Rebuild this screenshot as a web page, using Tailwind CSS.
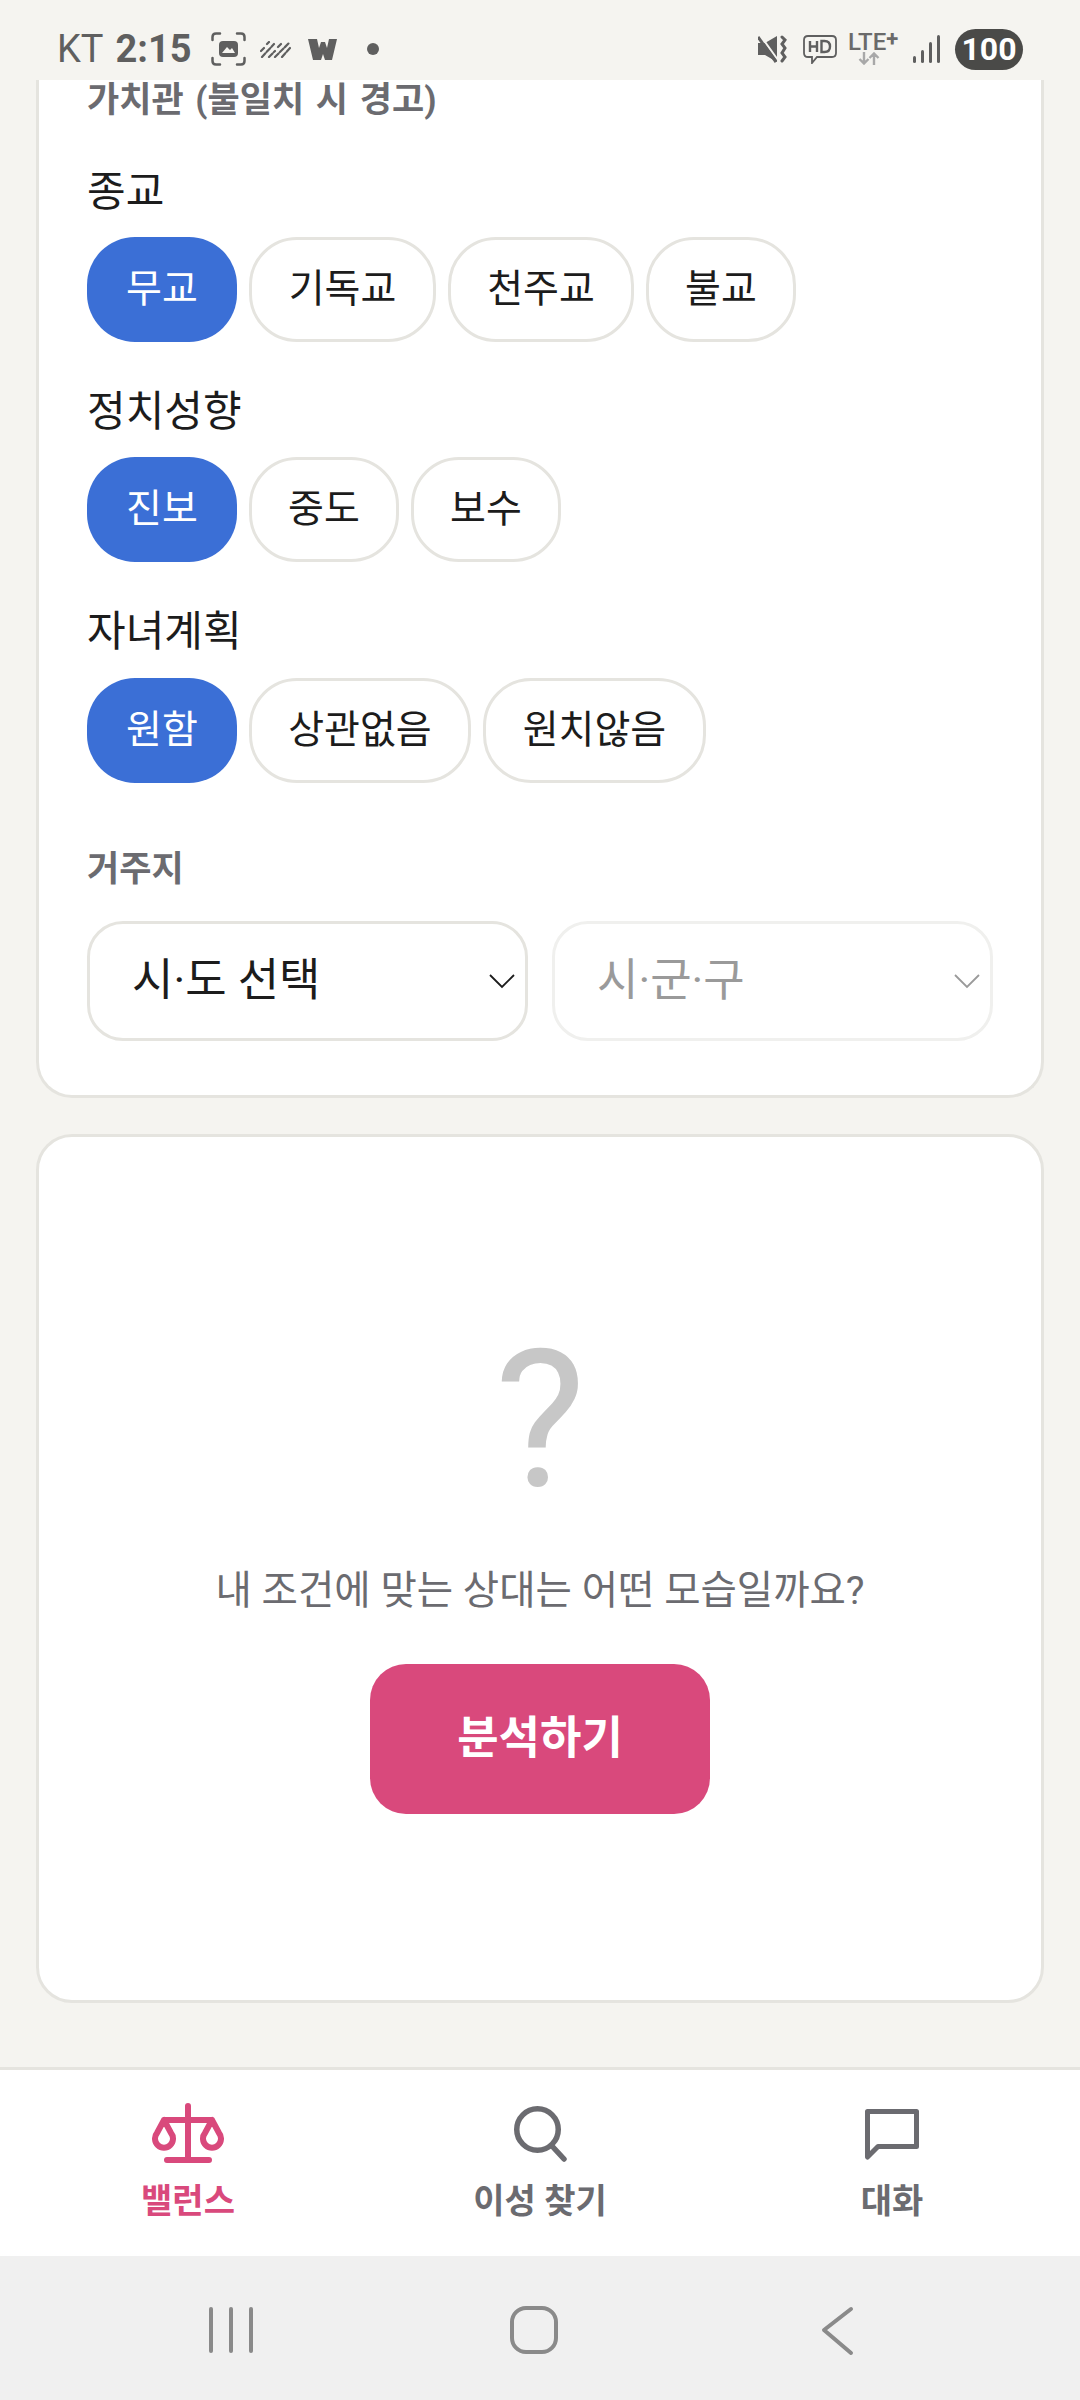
<!DOCTYPE html>
<html lang="ko">
<head>
  <meta charset="UTF-8" />
  <meta name="viewport" content="width=device-width, initial-scale=1.0"/>
  <title>밸런스</title>
  <script src="https://cdn.jsdelivr.net/npm/@tailwindcss/browser@4"></script>
</head>
<body class="bg-[#f5f4f0] font-['Roboto','Noto_Sans_CJK_KR',sans-serif]">
<div class="w-[1080px] h-[2400px] overflow-hidden flex flex-col">

  <!-- status bar -->
  <div class="h-[80px] shrink-0 flex items-center justify-between pl-[57px] pr-[57px] pt-[18px] text-[#5f5f5f]">
    <div class="flex items-center">
      <span class="text-[38px] leading-none">KT</span>
      <span class="text-[38px] leading-none font-bold ml-[12px]">2:15</span>
      <svg class="ml-[19px]" width="35" height="34" viewBox="0 0 35 34" fill="none" stroke="#5f5f5f" stroke-width="2.500" stroke-linecap="round"><path d="M1.500 8V5q0-3.500 3.500-3.500h4M26 1.500h4q3.500 0 3.500 3.500v3M33.500 26v3q0 3.500-3.500 3.500h-4M9 32.500H5q-3.500 0-3.500-3.500v-3"/><rect x="8" y="9" width="19" height="16" rx="4" fill="#5f5f5f" stroke="none"/><path d="M11 21l5-6 3 3 2-2 3 5z" fill="#f5f4f0" stroke="none"/></svg>
      <svg class="ml-[14px]" width="31" height="17" viewBox="0 0 31 17" fill="none" stroke="#5f5f5f" stroke-width="2.200" stroke-linecap="round"><path d="M1 10l3-3M7 3l2-2M2 16L14 3M9 16l6-6M18 6l3-3M15 16L29 2M22 16l8-9" stroke-dasharray="5 2"/></svg>
      <svg class="ml-[17px]" width="29" height="21" viewBox="0 0 29 21" fill="#5f5f5f"><path d="M0 0h9l2 9 2-6h4l2 6 2-9h8l-5 21h-7l-2-6-2 6H5z"/></svg>
      <span class="ml-[30px] w-[12px] h-[12px] rounded-full bg-[#5f5f5f]"></span>
    </div>
    <div class="flex items-center">
      <svg width="29" height="28" viewBox="0 0 29 28" fill="#5f5f5f"><path d="M0 8h7L19 1v26L7 20H0z"/><path d="M2 0l18 25" stroke="#f5f4f0" stroke-width="2"/><path d="M0 2l18 25" stroke="#5f5f5f" stroke-width="3"/><path d="M24 2l3 3-3 4 3 4-3 5 3 4-3 4" fill="none" stroke="#5f5f5f" stroke-width="3" stroke-linecap="round"/></svg>
      <svg class="ml-[16px]" width="34" height="29" viewBox="0 0 34 29" fill="none" stroke="#5f5f5f" stroke-width="1.800"><path d="M5 1h24q4 0 4 4v13q0 4-4 4H14l-5 6v-6H5q-4 0-4-4V5q0-4 4-4z"/><path d="M7 6v11M7 11.500h7M14 6v11M18.500 6v11h3q5.500 0 5.500-5.500T21.500 6z" stroke-width="2.400"/></svg>
      <div class="ml-[11px] w-[54px] h-[34px] flex flex-col items-start">
        <div class="flex items-start h-[20px]">
          <span class="text-[24px] leading-[20px] font-medium text-[#6a6a6a]">LTE</span>
          <span class="text-[22px] leading-[14px] font-bold text-[#6a6a6a]">+</span>
        </div>
        <svg class="ml-[10px]" width="22" height="13" viewBox="0 0 22 13" fill="none" stroke="#a8a8a8" stroke-width="2.400"><path d="M6 0v11M1.500 7L6 11.500 10.500 7M16 13V2M11.500 6L16 1.500 20.500 6"/></svg>
      </div>
      <svg class="ml-[11px]" width="27" height="28" viewBox="0 0 27 28" fill="#5f5f5f"><rect x="0" y="21" width="3" height="7" rx="1.500"/><rect x="8" y="15" width="3" height="13" rx="1.500"/><rect x="16" y="7" width="3" height="21" rx="1.500"/><rect x="24" y="0" width="3" height="28" rx="1.500"/></svg>
      <span class="ml-[15px] w-[68px] h-[41px] rounded-full bg-[#4a4a48] text-white text-[32px] font-bold leading-[41px] text-center">100</span>
    </div>
  </div>

  <!-- filter card, scrolled under the status bar -->
  <section class="mx-[36px] h-[1018px] shrink-0 bg-white border-[3px] border-t-0 border-[#e5e4df] rounded-b-[36px] px-[48px]">
    <h2 class="text-[35px] font-bold leading-[40px] text-[#6b6b70] mt-[1px] [word-spacing:3px]">가치관 (불일치 시 경고)</h2>

    <h3 class="text-[42px] leading-[56px] text-[#1c1c1c] mt-[43px]">종교</h3>
    <div class="flex gap-[12px] mt-[17px]">
      <span class="h-[105px] w-[150px] rounded-[48px] bg-[#3b6fd6] text-white text-[39px] flex items-center justify-center">무교</span>
      <span class="h-[105px] w-[187px] rounded-[48px] bg-white border-[3px] border-[#e5e4df] text-[#1c1c1c] text-[39px] flex items-center justify-center">기독교</span>
      <span class="h-[105px] w-[186px] rounded-[48px] bg-white border-[3px] border-[#e5e4df] text-[#1c1c1c] text-[39px] flex items-center justify-center">천주교</span>
      <span class="h-[105px] w-[150px] rounded-[48px] bg-white border-[3px] border-[#e5e4df] text-[#1c1c1c] text-[39px] flex items-center justify-center">불교</span>
    </div>

    <h3 class="text-[42px] leading-[56px] text-[#1c1c1c] mt-[42px]">정치성향</h3>
    <div class="flex gap-[12px] mt-[17px]">
      <span class="h-[105px] w-[150px] rounded-[48px] bg-[#3b6fd6] text-white text-[39px] flex items-center justify-center">진보</span>
      <span class="h-[105px] w-[150px] rounded-[48px] bg-white border-[3px] border-[#e5e4df] text-[#1c1c1c] text-[39px] flex items-center justify-center">중도</span>
      <span class="h-[105px] w-[150px] rounded-[48px] bg-white border-[3px] border-[#e5e4df] text-[#1c1c1c] text-[39px] flex items-center justify-center">보수</span>
    </div>

    <h3 class="text-[42px] leading-[56px] text-[#1c1c1c] mt-[42px]">자녀계획</h3>
    <div class="flex gap-[12px] mt-[18px]">
      <span class="h-[105px] w-[150px] rounded-[48px] bg-[#3b6fd6] text-white text-[39px] flex items-center justify-center">원함</span>
      <span class="h-[105px] w-[222px] rounded-[48px] bg-white border-[3px] border-[#e5e4df] text-[#1c1c1c] text-[39px] flex items-center justify-center">상관없음</span>
      <span class="h-[105px] w-[223px] rounded-[48px] bg-white border-[3px] border-[#e5e4df] text-[#1c1c1c] text-[39px] flex items-center justify-center">원치않음</span>
    </div>

    <h2 class="text-[35px] font-bold leading-[40px] text-[#6b6b70] mt-[67px]">거주지</h2>
    <div class="flex gap-[24px] mt-[31px]">
      <div class="flex-1 h-[120px] rounded-[36px] border-[3px] border-[#e5e4df] flex items-center justify-between pl-[42px] pr-[10px] text-[45px] text-[#1c1c1c]">
        <span>시·도 선택</span>
        <svg width="26" height="16" viewBox="0 0 26 16" fill="none" stroke="#1c1c1c" stroke-width="1.800"><path d="M1 2l12 12L25 2"/></svg>
      </div>
      <div class="flex-1 h-[120px] rounded-[36px] border-[3px] border-[#f0f0ee] flex items-center justify-between pl-[42px] pr-[10px] text-[45px] text-[#9a9a9a]">
        <span>시·군·구</span>
        <svg width="26" height="16" viewBox="0 0 26 16" fill="none" stroke="#9a9a9a" stroke-width="1.800"><path d="M1 2l12 12L25 2"/></svg>
      </div>
    </div>
  </section>

  <!-- result card -->
  <section class="mx-[36px] mt-[36px] h-[869px] shrink-0 bg-white border-[3px] border-[#e5e4df] rounded-[36px] flex flex-col items-center">
    <div class="text-[192px] leading-none text-[#c7c7c7] mt-[188px]">?</div>
    <p class="text-[39.500px] leading-[50px] text-[#6b6b70] mt-[49px]">내 조건에 맞는 상대는 어떤 모습일까요?</p>
    <button class="mt-[48px] w-[340px] h-[150px] rounded-[36px] bg-[#d9497c] text-white text-[45px] font-bold">분석하기</button>
  </section>

  <!-- bottom tabs -->
  <nav class="mt-[64px] h-[189px] shrink-0 bg-white border-t-[3px] border-[#e5e4df] grid grid-cols-3 px-[12px] text-[34px] font-bold">
    <div class="flex flex-col items-center pt-[33px] text-[#d9497c]">
      <svg width="72" height="60" viewBox="0 0 72 60" fill="none" stroke="#d9497c" stroke-width="6" stroke-linecap="round" stroke-linejoin="round"><path d="M36 3v54M15 57h42M12 17h48M12 17L5 30a9 9 0 1 0 14 0zM60 17l-7 13a9 9 0 1 0 14 0z"/></svg>
      <span class="mt-[16px] leading-[44px]">밸런스</span>
    </div>
    <div class="flex flex-col items-center pt-[33px] text-[#6b6b70]">
      <svg width="53" height="60" viewBox="0 0 53 60" fill="none" stroke="#6b6b70" stroke-width="5.500" stroke-linecap="round"><circle cx="23.500" cy="26.500" r="20.750"/><path d="M38 43l12 13"/></svg>
      <span class="mt-[16px] leading-[44px]">이성 찾기</span>
    </div>
    <div class="flex flex-col items-center pt-[33px] text-[#6b6b70]">
      <svg width="54" height="60" viewBox="0 0 54 60" fill="none" stroke="#6b6b70" stroke-width="5" stroke-linejoin="round"><path d="M2.500 8.500h49v35H13L2.500 54z"/></svg>
      <span class="mt-[16px] leading-[44px]">대화</span>
    </div>
  </nav>

  <!-- android nav bar -->
  <div class="flex-1 bg-[#f0f0f0] relative">
    <div class="absolute left-[209px] top-[51px] flex gap-[16px]">
      <span class="w-[4px] h-[46px] rounded-full bg-[#8a8a8a]"></span>
      <span class="w-[4px] h-[46px] rounded-full bg-[#8a8a8a]"></span>
      <span class="w-[4px] h-[46px] rounded-full bg-[#8a8a8a]"></span>
    </div>
    <span class="absolute left-[510px] top-[50px] w-[48px] h-[48px] rounded-[16px] border-[4px] border-[#8a8a8a]"></span>
    <svg class="absolute left-[818px] top-[50px]" width="36" height="50" viewBox="0 0 36 50" fill="none" stroke="#8a8a8a" stroke-width="4" stroke-linecap="round" stroke-linejoin="round"><path d="M33 3L6 24l27 23"/></svg>
  </div>
</div>
</body>
</html>
